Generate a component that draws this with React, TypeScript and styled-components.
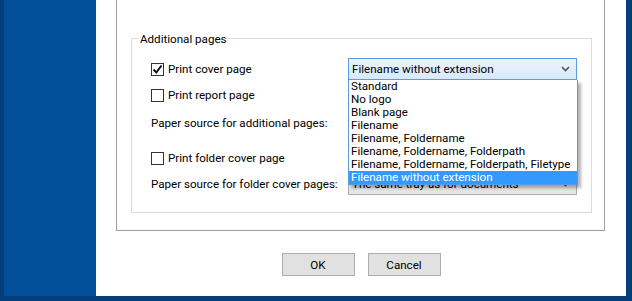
import React from 'react';
import styled, {createGlobalStyle} from 'styled-components';

const GlobalStyle = createGlobalStyle`
  html, body {
    margin: 0;
    padding: 0;
    background: #033d7a;
  }
  body {
    font-family: 'Segoe UI', Roboto, 'Liberation Sans', sans-serif;
    font-size: 11.6px;
    color: #000;
  }
`;

const Frame = styled.div`
  width: 632px;
  height: 301px;
  box-sizing: border-box;
  padding: 0 6px 5px 4px;
  background: #033d7a;
  display: flex;
  overflow: hidden;
`;

const Sidebar = styled.div`
  width: 92px;
  background: #02509a;
`;

const Dialog = styled.div`
  flex: 1;
  background: #fff;
  display: flex;
  flex-direction: column;
`;

const Panel = styled.div`
  margin: 0 21px 0 20px;
  border: 1px solid #a0a0a0;
  border-top: none;
  padding: 38px 12px 17px 14px;
`;

const Group = styled.div`
  border: 1px solid #dcdcdc;
  padding: 0 13px 17px 19px;
`;

const Caption = styled.div`
  width: fit-content;
  margin: -8px 0 0 -12px;
  padding: 0 1px;
  line-height: 16px;
  background: #fff;
`;

const Row = styled.div<{$gap: number}>`
  display: flex;
  align-items: center;
  height: 22px;
  margin-top: ${p => p.$gap}px;
`;

const Label = styled.label`
  width: 197px;
  display: flex;
  align-items: center;
  gap: 4px;
  white-space: nowrap;
`;

const Box = styled.span`
  width: 13px;
  height: 13px;
  box-sizing: border-box;
  border: 1px solid #333;
  background: #fff;
  display: flex;
  align-items: center;
  justify-content: center;
`;

const SelectWrap = styled.div`
  position: relative;
  width: 229px;
  height: 22px;
`;

const Select = styled.div<{$open?: boolean}>`
  height: 22px;
  box-sizing: border-box;
  border: 1px solid ${p => (p.$open ? '#569de5' : '#acacac')};
  background: ${p => (p.$open ? 'linear-gradient(#ecf4fc, #d6e9fc)' : '#e5e5e5')};
  display: flex;
  align-items: center;
  justify-content: space-between;
  padding: 0 6px 0 3px;
  white-space: nowrap;
`;

const List = styled.ul`
  position: absolute;
  z-index: 2;
  top: 22px;
  left: 0;
  width: 230px;
  box-sizing: border-box;
  margin: 0;
  padding: 0;
  list-style: none;
  background: #fff;
  border: 1px solid #569de5;
  border-top: none;
  box-shadow: 3px 3px 3px rgba(0, 0, 0, 0.3);
`;

const Item = styled.li<{$selected?: boolean}>`
  height: 13px;
  line-height: 13px;
  padding: 0 2px;
  white-space: nowrap;
  background: ${p => (p.$selected ? '#3399ff' : 'transparent')};
  color: ${p => (p.$selected ? '#fff' : '#000')};
`;

const Buttons = styled.div`
  display: flex;
  justify-content: center;
  gap: 13px;
  margin-top: 22px;
`;

const Button = styled.button`
  width: 73px;
  height: 23px;
  border: 1px solid #adadad;
  background: #e1e1e1;
  font: inherit;
  color: #000;
  padding: 0;
`;

const options = [
  'Standard',
  'No logo',
  'Blank page',
  'Filename',
  'Filename, Foldername',
  'Filename, Foldername, Folderpath',
  'Filename, Foldername, Folderpath, Filetype',
  'Filename without extension',
];

const Chevron = () => (
  <svg width="9" height="6" viewBox="0 0 9 6">
    <path d="M1 1l3.5 3.5L8 1" fill="none" stroke="#555" strokeWidth="1.6" />
  </svg>
);

const Check = ({checked}: {checked?: boolean}) => (
  <Box>
    {checked && (
      <svg width="11" height="11" viewBox="0 0 11 11">
        <path d="M1.5 5.5l2.8 3L9.5 1.5" fill="none" stroke="#111" strokeWidth="2" />
      </svg>
    )}
  </Box>
);

const Combo = ({value, open}: {value: string; open?: boolean}) => (
  <SelectWrap>
    <Select $open={open}>
      <span>{value}</span>
      <Chevron />
    </Select>
    {open && (
      <List>
        {options.map(o => (
          <Item key={o} $selected={o === value}>
            {o}
          </Item>
        ))}
      </List>
    )}
  </SelectWrap>
);

export default function App() {
  return (
    <Frame>
      <GlobalStyle />
      <Sidebar />
      <Dialog>
        <Panel>
          <Group>
            <Caption>Additional pages</Caption>
            <Row $gap={11}>
              <Label>
                <Check checked />
                Print cover page
              </Label>
              <Combo value="Filename without extension" open />
            </Row>
            <Row $gap={4}>
              <Label>
                <Check />
                Print report page
              </Label>
            </Row>
            <Row $gap={6}>
              <Label>Paper source for additional pages:</Label>
              <Combo value="The same tray as for documents" />
            </Row>
            <Row $gap={13}>
              <Label>
                <Check />
                Print folder cover page
              </Label>
            </Row>
            <Row $gap={4}>
              <Label>Paper source for folder cover pages:</Label>
              <Combo value="The same tray as for documents" />
            </Row>
          </Group>
        </Panel>
        <Buttons>
          <Button>OK</Button>
          <Button>Cancel</Button>
        </Buttons>
      </Dialog>
    </Frame>
  );
}
